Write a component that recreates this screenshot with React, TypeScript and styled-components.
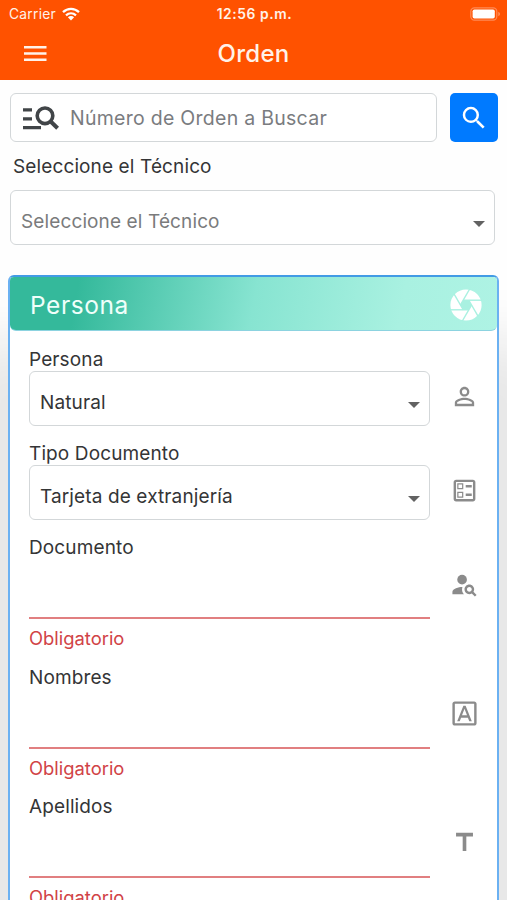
import React from "react";
import styled, { createGlobalStyle } from "styled-components";
import {
  MdSearch,
  MdPersonOutline,
  MdOutlineBallot,
  MdPersonSearch,
  MdOutlineFontDownload,
  MdTitle,
} from "react-icons/md";

const GlobalStyle = createGlobalStyle`
  * { box-sizing: border-box; }
  body { margin: 0; background: #fff; overflow: hidden; }
`;

const Screen = styled.div`
  width: 507px;
  height: 900px;
  overflow: hidden;
  display: flex;
  flex-direction: column;
  background: #fefefe;
  color: #343536;
  font-family: Inter, "Liberation Sans", sans-serif;
  font-size: 19px;
  line-height: 24px;
  letter-spacing: 0.12px;
`;

const TopBar = styled.header`
  flex: none;
  height: 80px;
  background: #ff5200;
  color: #fff2e9;
`;

const StatusBar = styled.div`
  display: grid;
  grid-template-columns: 1fr auto 1fr;
  align-items: center;
  height: 27px;
  padding: 0 7px 0 9px;
  font-size: 13.8px;
`;

const Carrier = styled.div`
  display: flex;
  align-items: center;
  gap: 6px;
  letter-spacing: 0.25px;
`;

const Clock = styled.div`
  font-weight: 600;
  letter-spacing: 0.6px;
`;

const BatterySlot = styled.div`
  display: flex;
  justify-content: flex-end;
`;

const NavBar = styled.div`
  display: grid;
  grid-template-columns: 1fr auto 1fr;
  align-items: center;
  height: 53px;
  padding: 0 24px;
`;

const Title = styled.h1`
  margin: 0;
  font-size: 24px;
  line-height: 30px;
  font-weight: 500;
  letter-spacing: 0.3px;
`;

const SearchRow = styled.div`
  display: flex;
  gap: 13px;
  padding: 13px 9px 0 10px;
`;

const SearchBox = styled.div`
  display: flex;
  align-items: center;
  gap: 11px;
  width: 427px;
  height: 49px;
  padding: 1px 0 0 12px;
  border: 1px solid #d3d7d9;
  border-radius: 6px;
  background: #fff;
  color: #7a7c7f;
  font-size: 19.5px;
  letter-spacing: 0.27px;
`;

const SearchButton = styled.button`
  display: grid;
  place-items: center;
  width: 48px;
  height: 49px;
  padding: 0;
  border: 0;
  border-radius: 5px;
  background: #007aff;
  color: #fff;
`;

const TechnicianField = styled.section`
  padding: 13px 12px 0 10px;
`;

const Label = styled.label<{ $indent?: number }>`
  display: block;
  height: 24px;
  padding-left: ${(p) => p.$indent ?? 0}px;
  white-space: nowrap;
`;

const SelectBox = styled.div<{ $placeholder?: boolean }>`
  display: flex;
  align-items: center;
  justify-content: space-between;
  height: 55px;
  padding: 8px 9px 0 10px;
  border: 1px solid #d3d7d9;
  border-radius: 6px;
  background: #fff;
  color: ${(p) => (p.$placeholder ? "#7a7b7c" : "#343536")};
`;

const TechnicianSelect = styled(SelectBox)`
  margin-top: 11px;
`;

const Arrow = styled.span`
  margin-top: 5px;
  border: 6px solid transparent;
  border-top-color: #626262;
  border-bottom-width: 0;
`;

const Card = styled.section`
  width: 491px;
  height: 700px;
  margin: 30px 0 0 8px;
  flex: none;
  border: 2px solid #6bb1f2;
  border-top-color: #429be5;
  border-radius: 6px 6px 0 0;
  background: #fff;
  box-shadow: 0 125px 60px 60px #e8e8e8;
`;

const CardHeader = styled.div`
  display: flex;
  align-items: center;
  justify-content: space-between;
  height: 54px;
  padding: 2px 15px 0 20px;
  border-bottom: 1px solid #8cd3e0;
  border-radius: 4px 4px 6px 6px;
  background: linear-gradient(100deg, #34b99b 0%, #34b99b 14%, #87e4d1 50%, #a9f1e1 80%, #aef3e4 100%);
  color: #effffa;
`;

const CardTitle = styled.h2`
  margin: 0;
  font-family: Inter, sans-serif;
  font-size: 24.5px;
  font-weight: 400;
  letter-spacing: 0.55px;
`;

const Fields = styled.div`
  padding: 17px 19px 0 19px;
`;

const FieldRow = styled.div<{ $height: number }>`
  display: grid;
  grid-template-columns: 401px 1fr;
  height: ${(p) => p.$height}px;
`;

const SelectBody = styled.div`
  margin-top: -1px;
`;

const IconSlot = styled.div<{ $top: number }>`
  display: flex;
  justify-content: flex-end;
  width: 48.5px;
  padding-top: ${(p) => p.$top}px;
  color: #8b8b8b;
`;

const TextInput = styled.div`
  height: 59px;
  border-bottom: 2px solid #e17f80;
`;

const ErrorText = styled.div`
  margin-top: 7px;
  color: #d14346;
  font-size: 18.4px;
  letter-spacing: 0;
`;

function WifiIcon() {
  return (
    <svg width="18" height="14" viewBox="0 0 18 14" fill="none" stroke="#fff" strokeWidth="2.3">
      <path d="M1 5.1C5.6.8 12.4.8 17 5.1M4 8.3c3-2.7 7-2.7 10 0" />
      <path d="M5.9 10.2c1.8-1.6 4.4-1.6 6.2 0L9 13.4Z" fill="#fff" stroke="none" />
    </svg>
  );
}

function BatteryIcon() {
  return (
    <svg width="30" height="14" viewBox="0 0 30 14">
      <rect x=".8" y=".8" width="26" height="12.4" rx="3.6" fill="none" stroke="#ff8a55" strokeWidth="1.2" />
      <rect x="2.6" y="2.5" width="22.2" height="9" rx="1.8" fill="#fff" />
      <path d="M28.4 4.8q1.5.7 1.5 2.2t-1.5 2.2Z" fill="#ff9a6b" />
    </svg>
  );
}

function MenuIcon() {
  return (
    <svg width="23" height="16" viewBox="0 0 23 16" fill="#fff2e9">
      <path d="M0 0h22.5v2.4H0zM0 6.3h22.5v2.4H0zM0 12.6h22.5v2.4H0z" />
    </svg>
  );
}

function ListSearchIcon() {
  return (
    <svg width="36" height="25" viewBox="0 0 36 25" fill="none" stroke="#414548">
      <path d="M0 3.9h9M0 12.9h9M0 21.7h18" strokeWidth="3.3" />
      <circle cx="22" cy="9.8" r="7.8" strokeWidth="3.6" />
      <path d="m27.2 15 7.4 7.2" strokeWidth="4" />
    </svg>
  );
}

/* Six-blade shutter: a disc cut by lines tangent to the central opening. */
function ShutterIcon() {
  const blades = [0, 60, 120, 180, 240, 300];
  return (
    <svg width="32" height="32" viewBox="-16 -16 32 32">
      <circle r="15.6" fill="#fff" />
      <g stroke="#a9f1e1" strokeWidth="1.4">
        {blades.map((angle) => (
          <path key={angle} d="M-3-4.8H15.7" transform={`rotate(${angle})`} />
        ))}
      </g>
      <path d="M-2.8-4.8h5.6L5.6 0 2.8 4.8h-5.6L-5.6 0Z" fill="#a9f1e1" />
    </svg>
  );
}

function Field({ label, icon, height, top }: { label: string; icon: React.ReactNode; height: number; top: number }) {
  return (
    <FieldRow $height={height}>
      <div>
        <Label>{label}</Label>
        <TextInput role="textbox" />
        <ErrorText>Obligatorio</ErrorText>
      </div>
      <IconSlot $top={top}>{icon}</IconSlot>
    </FieldRow>
  );
}

function SelectField({ label, value, icon }: { label: string; value: string; icon: React.ReactNode }) {
  return (
    <FieldRow $height={94}>
      <div>
        <Label>{label}</Label>
        <SelectBody>
          <SelectBox>
            {value}
            <Arrow />
          </SelectBox>
        </SelectBody>
      </div>
      <IconSlot $top={34}>{icon}</IconSlot>
    </FieldRow>
  );
}

export default function App() {
  return (
    <Screen>
      <GlobalStyle />
      <TopBar>
        <StatusBar>
          <Carrier>
            Carrier
            <WifiIcon />
          </Carrier>
          <Clock>12:56 p.m.</Clock>
          <BatterySlot>
            <BatteryIcon />
          </BatterySlot>
        </StatusBar>
        <NavBar>
          <MenuIcon />
          <Title>Orden</Title>
        </NavBar>
      </TopBar>
      <SearchRow>
        <SearchBox>
          <ListSearchIcon />
          <span>Número de Orden a Buscar</span>
        </SearchBox>
        <SearchButton aria-label="Buscar">
          <MdSearch size={30} />
        </SearchButton>
      </SearchRow>
      <TechnicianField>
        <Label $indent={3}>Seleccione el Técnico</Label>
        <TechnicianSelect $placeholder>
          Seleccione el Técnico
          <Arrow />
        </TechnicianSelect>
      </TechnicianField>
      <Card>
        <CardHeader>
          <CardTitle>Persona</CardTitle>
          <ShutterIcon />
        </CardHeader>
        <Fields>
          <SelectField label="Persona" value="Natural" icon={<MdPersonOutline size={29} />} />
          <SelectField label="Tipo Documento" value="Tarjeta de extranjería" icon={<MdOutlineBallot size={29} />} />
          <Field label="Documento" height={130} top={34} icon={<MdPersonSearch size={29} />} />
          <Field label="Nombres" height={129} top={33} icon={<MdOutlineFontDownload size={29} />} />
          <Field label="Apellidos" height={130} top={33} icon={<MdTitle size={29} />} />
        </Fields>
      </Card>
    </Screen>
  );
}
